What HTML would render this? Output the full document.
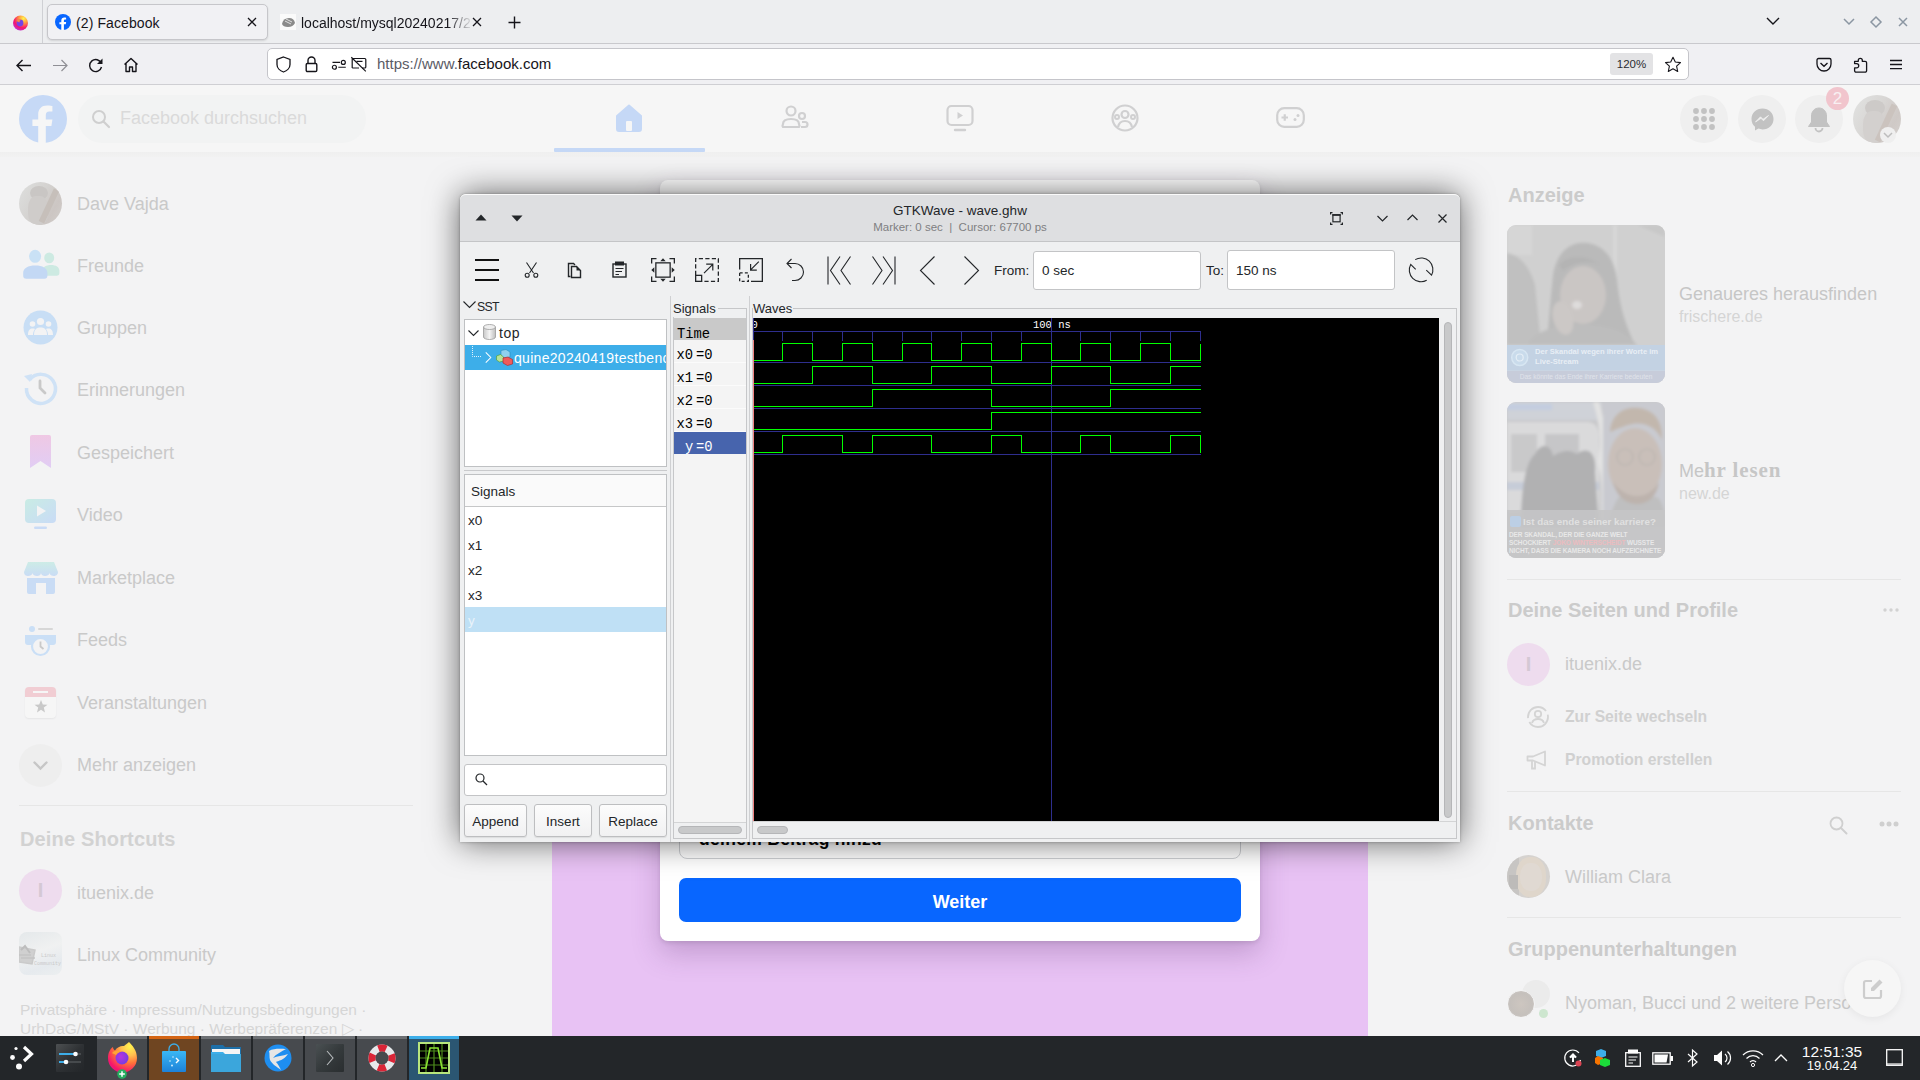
<!DOCTYPE html>
<html><head><meta charset="utf-8">
<style>
*{box-sizing:border-box;margin:0;padding:0}
html,body{width:1920px;height:1080px;overflow:hidden;background:#f3f3f4;font-family:"Liberation Sans",sans-serif}
.a{position:absolute}
svg{position:absolute;overflow:visible}
/* firefox */
#tabs{left:0;top:0;width:1920px;height:43px;background:#edeef0}
#nav{left:0;top:43px;width:1920px;height:42px;background:#f0f0f3;border-top:1px solid #c9c9cd;border-bottom:1px solid #cfcfd3}
#fb{left:0;top:85px;width:1920px;height:951px;background:#f3f3f4;overflow:hidden}
#gw{left:460px;top:194px;width:1000px;height:648px;background:#eff0f1;border-radius:6px 6px 0 0;box-shadow:0 0 3px rgba(0,0,0,.3), 0 0 32px rgba(0,0,0,.6)}
.it{position:absolute;left:77px;margin-top:1px;font-size:18px;line-height:22px;color:#c9c9c9;white-space:nowrap}
.sg{left:8px;font-size:13.5px;line-height:18px;color:#232629}
.btn{height:33px;border:1px solid #bdbec0;border-radius:3px;background:linear-gradient(#fcfcfc,#f1f1f2);box-shadow:0 1px 1px rgba(0,0,0,.08);font-size:13.5px;line-height:34px;text-align:center;color:#232629}
.mono{font-family:"Liberation Mono",monospace;font-size:13.8px;line-height:16px;color:#000;white-space:pre}
.tk{top:0;width:50px;height:44px;background:#474a4e;border-top:3px solid #6c6f73}
#task{left:0;top:1036px;width:1920px;height:44px;background:#232629}
</style></head><body>
<div id="tabs" class="a">
  <div class="a" style="left:42px;top:0;width:1px;height:43px;background:#cfd0d4"></div>
  <!-- firefox logo -->
  <svg style="left:12px;top:14px" width="17" height="17" viewBox="0 0 17 17">
    <defs><radialGradient id="ffg" cx="0.7" cy="0.2" r="0.9"><stop offset="0" stop-color="#fff44f"/><stop offset="0.35" stop-color="#ff9640"/><stop offset="0.7" stop-color="#f5156c"/><stop offset="1" stop-color="#b833e1"/></radialGradient></defs>
    <circle cx="8.5" cy="9" r="7.5" fill="url(#ffg)"/>
    <circle cx="8" cy="9" r="3.4" fill="#7542e5"/>
    <path d="M4.5 7 Q6 4.5 9.5 5.5 Q7 6.5 7.5 8.5 Z" fill="#ff8a3a"/>
  </svg>
  <div class="a" style="left:47px;top:4px;width:221px;height:36px;background:#f1f1f4;border:1px solid #c6c6ca;border-radius:5px;box-shadow:0 1px 2px rgba(0,0,0,.12)"></div>
  <svg style="left:55px;top:14px" width="16" height="16" viewBox="0 0 16 16"><circle cx="8" cy="8" r="8" fill="#0866ff"/><path d="M8.9 16V10.3h1.9l.35-2.2H8.9V6.8c0-.6.3-1.2 1.2-1.2h1V3.7s-.9-.15-1.8-.15c-1.8 0-3 1.1-3 3.1v1.5H4.4v2.2h1.9V16z" fill="#fff"/></svg>
  <div class="a" style="left:76px;top:14px;font-size:14px;line-height:18px;color:#15141a;letter-spacing:0.1px">(2) Facebook</div>
  <svg style="left:247px;top:17px" width="10" height="10" viewBox="0 0 10 10"><path d="M1 1L9 9M9 1L1 9" stroke="#15141a" stroke-width="1.3"/></svg>
  <!-- tab 2 -->
  <svg style="left:280px;top:14px" width="16" height="16" viewBox="0 0 16 16"><rect x="0" y="0" width="16" height="16" fill="#fafafa"/><path d="M2 10 Q3 4 9 4 Q14 4 15 9 Q13 13 8 13 Q3 13 2 10Z" fill="#8a8a8a"/><path d="M5 7 L11 10 M6 5 L12 8" stroke="#e0e0e0" stroke-width="1"/></svg>
  <div class="a" style="left:301px;top:14px;width:172px;height:20px;overflow:hidden;white-space:nowrap;font-size:14px;line-height:18px;color:#15141a;-webkit-mask-image:linear-gradient(90deg,#000 85%,transparent 100%)">localhost/mysql20240217/2</div>
  <svg style="left:472px;top:17px" width="10" height="10" viewBox="0 0 10 10"><path d="M1 1L9 9M9 1L1 9" stroke="#15141a" stroke-width="1.3"/></svg>
  <svg style="left:508px;top:16px" width="13" height="13" viewBox="0 0 13 13"><path d="M6.5 0.5V12.5M0.5 6.5H12.5" stroke="#15141a" stroke-width="1.4"/></svg>
  <!-- right -->
  <svg style="left:1766px;top:17px" width="14" height="8" viewBox="0 0 14 8"><path d="M1 1L7 7L13 1" stroke="#15141a" stroke-width="1.4" fill="none"/></svg>
  <svg style="left:1843px;top:18px" width="12" height="7" viewBox="0 0 12 7"><path d="M1 1L6 6L11 1" stroke="#8b96a2" stroke-width="1.5" fill="none"/></svg>
  <svg style="left:1870px;top:16px" width="12" height="12" viewBox="0 0 12 12"><path d="M6 1L11 6L6 11L1 6Z" stroke="#8b96a2" stroke-width="1.5" fill="none"/></svg>
  <svg style="left:1898px;top:17px" width="10" height="10" viewBox="0 0 10 10"><path d="M1 1L9 9M9 1L1 9" stroke="#8b96a2" stroke-width="1.5"/></svg>
</div>
<div id="nav" class="a">
  <svg style="left:16px;top:15px" width="16" height="13" viewBox="0 0 16 13"><path d="M15 6.5H1.5M6.5 1L1 6.5L6.5 12" stroke="#15141a" stroke-width="1.4" fill="none"/></svg>
  <svg style="left:52px;top:15px" width="16" height="13" viewBox="0 0 16 13"><path d="M1 6.5H14.5M9.5 1L15 6.5L9.5 12" stroke="#8f8f95" stroke-width="1.2" fill="none"/></svg>
  <svg style="left:88px;top:13px" width="16" height="16" viewBox="0 0 16 16"><path d="M13.3 6.5A6 6 0 1 0 13.5 10" stroke="#15141a" stroke-width="1.4" fill="none"/><path d="M14.5 1.5V7H9Z" fill="#15141a"/></svg>
  <svg style="left:123px;top:13px" width="16" height="16" viewBox="0 0 16 16"><path d="M1.5 7.5L8 1.5L14.5 7.5M3 6.5V14.5H6.5V10H9.5V14.5H13V6.5" stroke="#15141a" stroke-width="1.4" fill="none" stroke-linejoin="round"/></svg>
  <div class="a" style="left:267px;top:4px;width:1422px;height:32px;background:#fff;border:1px solid #c5c5ca;border-radius:5px"></div>
  <svg style="left:276px;top:12px" width="15" height="17" viewBox="0 0 15 17"><path d="M7.5 1L14 3.5V8.5C14 12 11 15 7.5 16C4 15 1 12 1 8.5V3.5Z" stroke="#15141a" stroke-width="1.3" fill="none"/></svg>
  <svg style="left:305px;top:12px" width="13" height="17" viewBox="0 0 13 17"><path d="M3 7V4.5A3.5 3.5 0 0 1 10 4.5V7" stroke="#15141a" stroke-width="1.4" fill="none"/><rect x="1.2" y="7.5" width="10.6" height="8" rx="1.2" stroke="#15141a" stroke-width="1.4" fill="none"/></svg>
  <svg style="left:332px;top:14px" width="15" height="13" viewBox="0 0 15 13"><path d="M0.5 4.4H8M6.3 9.25H13.8" stroke="#15141a" stroke-width="1.2"/><circle cx="11.3" cy="4.4" r="2" stroke="#15141a" stroke-width="1.2" fill="none"/><circle cx="2.4" cy="9.25" r="2" stroke="#15141a" stroke-width="1.2" fill="none"/></svg>
  <svg style="left:351px;top:13px" width="16" height="16" viewBox="0 0 16 16"><path d="M1.2 11V2.5A1 1 0 0 1 2.2 1.5H13.8A1 1 0 0 1 14.8 2.5V10A1 1 0 0 1 13.8 11H11M8 11H1.2" stroke="#15141a" stroke-width="1.2" fill="none"/><path d="M5.5 4.4H11.5" stroke="#15141a" stroke-width="1.2"/><path d="M0.3 0.3L14.8 14.4" stroke="#15141a" stroke-width="1.2"/></svg>
  <div class="a" style="left:377px;top:11px;font-size:15px;line-height:18px;color:#5b5b66;white-space:nowrap">https://www.<span style="color:#15141a">facebook.com</span></div>
  <div class="a" style="left:1610px;top:9px;width:43px;height:22px;background:#e3e3e5;border-radius:3px;font-size:11.5px;line-height:22px;text-align:center;color:#2b2b30">120%</div>
  <svg style="left:1664px;top:12px" width="18" height="17" viewBox="0 0 18 17"><path d="M9 1.2L11.3 6L16.5 6.6L12.6 10.2L13.7 15.5L9 12.8L4.3 15.5L5.4 10.2L1.5 6.6L6.7 6Z" stroke="#15141a" stroke-width="1.1" fill="none" stroke-linejoin="round"/></svg>
  <svg style="left:1816px;top:13px" width="16" height="15" viewBox="0 0 16 15"><path d="M2.5 1.5H13.5A1.5 1.5 0 0 1 15 3V7A7 7 0 0 1 1 7V3A1.5 1.5 0 0 1 2.5 1.5Z" stroke="#15141a" stroke-width="1.3" fill="none"/><path d="M4.5 6L8 9.2L11.5 6" stroke="#15141a" stroke-width="1.4" fill="none"/></svg>
  <svg style="left:1852px;top:12px" width="17" height="17" viewBox="0 0 17 17"><path d="M2.6 5.3H6.3V4.3A2 2 0 0 1 10.3 4.3V5.3H13.1A1.5 1.5 0 0 1 14.6 6.8V14.7A1.5 1.5 0 0 1 13.1 16.2H4.1A1.5 1.5 0 0 1 2.6 14.7V11.9H4.6A2.15 2.15 0 0 0 4.6 7.6H2.6Z" stroke="#15141a" stroke-width="1.3" fill="none" stroke-linejoin="round"/></svg>
  <svg style="left:1888px;top:14px" width="16" height="13" viewBox="0 0 16 13"><path d="M2 2.5H14M2 6.5H14M2 10.6H14" stroke="#15141a" stroke-width="1.3"/></svg>
</div>
<div id="fb" class="a">
  <!-- header -->
  <div class="a" style="left:0;top:0;width:1920px;height:67px;background:#f6f6f6"></div>
  <svg style="left:19px;top:10px" width="48" height="48" viewBox="0 0 48 48"><circle cx="24" cy="24" r="24" fill="#c6d9f6"/><path d="M26.8 48V31h5.6l1-6.6h-6.6v-4.2c0-1.9.9-3.6 3.6-3.6h3v-5.6s-2.7-.5-5.3-.5c-5.4 0-8.9 3.3-8.9 9.2v4.7h-5.8V31h5.8v17z" fill="#f6f6f6"/></svg>
  <div class="a" style="left:78px;top:10px;width:288px;height:48px;border-radius:24px;background:#f2f3f3"></div>
  <svg style="left:91px;top:24px" width="20" height="20" viewBox="0 0 20 20"><circle cx="8" cy="8" r="6" stroke="#cfcfcf" stroke-width="2" fill="none"/><path d="M12.5 12.5L18 18" stroke="#cfcfcf" stroke-width="2.2" stroke-linecap="round"/></svg>
  <div class="a" style="left:120px;top:22px;font-size:18px;line-height:22px;color:#dadada;white-space:nowrap">Facebook durchsuchen</div>
  <!-- nav icons -->
  <svg style="left:615px;top:19px" width="28" height="28" viewBox="0 0 28 28"><path d="M14 1.5L26 12V25A2 2 0 0 1 24 27H4A2 2 0 0 1 2 25V12Z" fill="#c5d8f6" stroke="#c5d8f6" stroke-width="2" stroke-linejoin="round"/><rect x="11" y="17" width="6" height="10" rx="1" fill="#f6f6f6"/></svg>
  <div class="a" style="left:554px;top:63px;width:151px;height:3.5px;background:#c5d8f6;border-radius:1px"></div>
  <div class="a" style="left:0;top:67px;width:1920px;height:5px;background:linear-gradient(#efefef,#f2f2f2)"></div>
  <svg style="left:781px;top:20px" width="28" height="26" viewBox="0 0 28 26"><circle cx="10" cy="6" r="4.5" stroke="#d0d0d1" stroke-width="2.2" fill="none"/><path d="M2 22A3 3 0 0 1 2 19C2 15 6 14 10 14C14 14 18 15 18 19A3 3 0 0 1 18 22Z" stroke="#d0d0d1" stroke-width="2.2" fill="none"/><circle cx="21" cy="11" r="3" stroke="#d0d0d1" stroke-width="2.2" fill="none"/><path d="M20 22H24A2.5 2.5 0 0 0 24 17H21" stroke="#d0d0d1" stroke-width="2.2" fill="none"/></svg>
  <svg style="left:946px;top:19px" width="28" height="28" viewBox="0 0 28 28"><rect x="1.5" y="2" width="25" height="19" rx="4" stroke="#d0d0d1" stroke-width="2.2" fill="none"/><path d="M11.5 8V15L17 11.5Z" fill="#d0d0d1"/><path d="M9 26H19" stroke="#d0d0d1" stroke-width="2.4" stroke-linecap="round"/></svg>
  <svg style="left:1111px;top:19px" width="28" height="28" viewBox="0 0 28 28"><circle cx="14" cy="14" r="12.5" stroke="#d0d0d1" stroke-width="2.2" fill="none"/><circle cx="14" cy="10.5" r="3.5" stroke="#d0d0d1" stroke-width="2.2" fill="none"/><circle cx="6" cy="13" r="2" stroke="#d0d0d1" stroke-width="2" fill="none"/><circle cx="22" cy="13" r="2" stroke="#d0d0d1" stroke-width="2" fill="none"/><path d="M7 23C8 18 11 17 14 17C17 17 20 18 21 23" stroke="#d0d0d1" stroke-width="2.2" fill="none"/></svg>
  <svg style="left:1276px;top:22px" width="29" height="21" viewBox="0 0 29 21"><rect x="1.2" y="1.2" width="26.6" height="18.6" rx="7" stroke="#d0d0d1" stroke-width="2.2" fill="none"/><path d="M5.5 10.5H12M8.75 7.2V13.8" stroke="#d0d0d1" stroke-width="2.2"/><circle cx="19" cy="12.5" r="1.5" fill="#d0d0d1"/><circle cx="22" cy="8.5" r="1.5" fill="#d0d0d1"/></svg>
  <!-- right header -->
  <div class="a" style="left:1680px;top:10px;width:48px;height:48px;border-radius:50%;background:#efefef"></div>
  <svg style="left:1693px;top:23px" width="22" height="22" viewBox="0 0 22 22"><g fill="#c2c2c2"><circle cx="3" cy="3" r="2.9"/><circle cx="11" cy="3" r="2.9"/><circle cx="19" cy="3" r="2.9"/><circle cx="3" cy="11" r="2.9"/><circle cx="11" cy="11" r="2.9"/><circle cx="19" cy="11" r="2.9"/><circle cx="3" cy="19" r="2.9"/><circle cx="11" cy="19" r="2.9"/><circle cx="19" cy="19" r="2.9"/></g></svg>
  <div class="a" style="left:1738px;top:10px;width:48px;height:48px;border-radius:50%;background:#efefef"></div>
  <svg style="left:1751px;top:23px" width="23" height="23" viewBox="0 0 23 23"><path d="M11.5 0.5C5.3 0.5 0.5 5 0.5 11C0.5 14.2 1.8 17 4 18.8V22.5L7.4 20.6C8.7 21.1 10 21.4 11.5 21.4C17.7 21.4 22.5 16.9 22.5 10.9C22.5 5 17.7 0.5 11.5 0.5Z" fill="#c2c2c2"/><path d="M4.5 14L9.5 8.8L12 11.3L17.5 7.5L12.5 12.8L10 10.3Z" fill="#efefef" stroke="#efefef" stroke-width="0.8" stroke-linejoin="round"/></svg>
  <div class="a" style="left:1795px;top:10px;width:48px;height:48px;border-radius:50%;background:#efefef"></div>
  <svg style="left:1808px;top:22px" width="22" height="25" viewBox="0 0 22 25"><path d="M11 1C6.5 1 3.5 4.5 3.5 9V15L0.5 19.5H21.5L18.5 15V9C18.5 4.5 15.5 1 11 1Z" fill="#c2c2c2" stroke="#c2c2c2" stroke-linejoin="round"/><path d="M7.5 21A3.5 3.5 0 0 0 14.5 21" stroke="#c2c2c2" stroke-width="1.8" fill="none"/></svg>
  <div class="a" style="left:1826px;top:2px;width:23px;height:23px;border-radius:50%;background:#f1c5cd;color:#f8f0f2;font-size:17px;line-height:23px;text-align:center">2</div>
  <div class="a" style="left:1853px;top:10px;width:48px;height:48px;border-radius:50%;background:linear-gradient(120deg,#e2e3e2 0,#d8d6d4 45%,#cfc9c6 75%,#d6d2cf 100%);overflow:hidden">
    <div class="a" style="left:12px;top:5px;width:20px;height:16px;border-radius:50%;background:#cdcac8"></div>
    <div class="a" style="left:10px;top:16px;width:22px;height:32px;border-radius:40%;background:#d3d0ce"></div>
    <div class="a" style="left:30px;top:8px;width:6px;height:40px;background:#cbc3be;transform:rotate(25deg)"></div>
  </div>
  <div class="a" style="left:1880px;top:42px;width:16px;height:16px;border-radius:50%;background:#efefef"></div>
  <svg style="left:1883px;top:47px" width="10" height="6" viewBox="0 0 10 6"><path d="M1 1L5 5L9 1" stroke="#bdbdbd" stroke-width="1.5" fill="none"/></svg>

  <!-- modal area (center) -->
  <div class="a" style="left:552px;top:85px;width:816px;height:866px;background:#e8c2f4"></div>
  <div class="a" style="left:552px;top:86px;width:816px;height:200px;background:#f3f3f4;border-radius:8px;border:1px solid #ececec"></div>
  <div class="a" style="left:552px;top:85px;width:816px;height:580px;background:#f3f3f4;border-radius:0 0 8px 8px"></div>
  <div class="a" style="left:660px;top:95px;width:600px;height:761px;background:#fff;border-radius:8px;box-shadow:0 12px 28px rgba(80,40,100,.25),0 2px 4px rgba(0,0,0,.1)"></div>
  <div class="a" style="left:679px;top:700px;width:562px;height:74px;border:1px solid #ced0d4;border-radius:8px;background:#fff"></div>
  <div class="a" style="left:699px;top:744px;font-size:17.5px;line-height:20px;font-weight:bold;color:#050505;white-space:nowrap;letter-spacing:0.3px">deinem Beitrag hinzu</div>
  <div class="a" style="left:679px;top:793px;width:562px;height:44px;border-radius:7px;background:#0866ff;color:#fff;font-weight:bold;font-size:18px;line-height:48px;text-align:center">Weiter</div>

  <!-- right sidebar -->
  <div class="a" style="left:1508px;top:98px;font-size:20px;line-height:24px;font-weight:bold;color:#cbcbcb">Anzeige</div>
  <div class="a" style="left:1507px;top:140px;width:158px;height:158px;border-radius:9px;overflow:hidden;background:#d1d1d1">
  <svg style="left:0;top:0" width="158" height="158" viewBox="0 0 158 158">
    <defs><filter id="bl1" x="-20%" y="-20%" width="140%" height="140%"><feGaussianBlur stdDeviation="1.6"/></filter></defs>
    <g filter="url(#bl1)">
      <rect x="0" y="0" width="158" height="158" fill="#d0d0d0"/>
      <rect x="0" y="0" width="25" height="30" fill="#d6d6d6"/>
      <rect x="106" y="0" width="4" height="120" fill="#d7d7d7"/>
      <path d="M130 0L158 12V0Z" fill="#c8c8c8"/>
      <path d="M0 28C12 30 22 40 28 60L34 120H0Z" fill="#c0c0c0"/>
      <path d="M40 120C42 90 44 70 46 50C50 25 65 16 80 18C98 20 108 35 110 55C112 75 116 95 128 120Z" fill="#bababa"/>
      <ellipse cx="76" cy="70" rx="23" ry="29" fill="#cac6c4"/>
      <path d="M52 40C60 30 80 28 96 42C90 36 70 34 56 46Z" fill="#b4b4b4"/>
      <path d="M20 120C30 104 50 100 76 100C100 100 118 106 130 120Z" fill="#bdbdbd"/>
      <ellipse cx="56" cy="93" rx="10" ry="17" fill="#ccc8c6" transform="rotate(-15 56 93)"/>
      <ellipse cx="70" cy="80" rx="5" ry="4" fill="#dedcdb"/>
    </g>
    <rect x="0" y="120" width="158" height="26" fill="#c3d2e3"/>
    <rect x="0" y="145.5" width="158" height="1" fill="#d0d8e4"/>
    <rect x="0" y="146" width="158" height="12" fill="#c7ccda"/>
    <circle cx="12.7" cy="132.5" r="8" fill="#c9dbeb" stroke="#d7e6f2" stroke-width="1.5"/>
    <circle cx="12.7" cy="132.5" r="3.5" fill="none" stroke="#e5eef6" stroke-width="1.2"/>
  </svg>
  <div class="a" style="left:28px;top:122px;font-size:7.6px;line-height:10px;font-weight:bold;color:#e8eef5;white-space:nowrap">Der Skandal wegen ihrer Worte im<br>Live-Stream</div>
  <div class="a" style="left:0;top:147px;width:158px;font-size:6.6px;line-height:10px;color:#e0e3ea;text-align:center;white-space:nowrap">Das könnte das Ende ihrer Karriere bedeuten</div>
</div>
  <div class="a" style="left:1679px;top:198px;font-size:18px;line-height:22px;color:#c6c6c6;white-space:nowrap">Genaueres herausfinden</div>
  <div class="a" style="left:1679px;top:222px;font-size:16px;line-height:19px;color:#d5d5d5;white-space:nowrap">frischere.de</div>
  <div class="a" style="left:1507px;top:317px;width:158px;height:156px;border-radius:9px;overflow:hidden;background:#c9c9cb">
  <svg style="left:0;top:0" width="158" height="156" viewBox="0 0 158 156">
    <defs><filter id="bl2" x="-20%" y="-20%" width="140%" height="140%"><feGaussianBlur stdDeviation="1.4"/></filter></defs>
    <g filter="url(#bl2)">
      <rect x="0" y="0" width="158" height="156" fill="#c8c8ca"/>
      <rect x="0" y="0" width="95" height="18" fill="#cfd2d8"/>
      <rect x="0" y="2" width="45" height="6" fill="#c3cde0"/>
      <path d="M0 20H80C88 20 92 26 92 34V110H0Z" fill="#dadadb"/>
      <path d="M4 32H30V70H4Z" fill="#c9c9ca"/>
      <path d="M38 32H72V62H38Z" fill="#c6c6c8"/>
      <rect x="0" y="80" width="92" height="8" fill="#c6ccd8"/>
      <path d="M14 125C14 90 18 60 28 52C34 40 44 42 46 54C52 50 62 46 70 52C80 44 90 50 88 70L92 125Z" fill="#b1b1b2"/>
      <path d="M86 0C92 20 96 40 90 60C98 80 92 100 96 125L102 125C98 100 104 80 96 60C102 40 98 20 92 0Z" fill="#e2e2e2"/>
      <path d="M96 0H158V156H96Z" fill="#c9cad0"/>
      <path d="M100 125C104 110 108 100 112 95L150 95C156 100 158 110 158 125Z" fill="#bfbfc0"/>
      <ellipse cx="128" cy="62" rx="27" ry="36" fill="#c9bfb9"/>
      <path d="M103 30C104 10 120 4 132 6C148 8 156 20 155 38C150 26 138 20 126 22C116 24 108 28 103 30Z" fill="#c2b7ad"/>
      <path d="M106 80C110 96 120 102 130 102C142 102 150 94 152 80C146 90 138 94 130 94C120 94 112 88 106 80Z" fill="#bdb3ad"/>
      <circle cx="118" cy="55" r="8" fill="none" stroke="#b9b3ae" stroke-width="1.2"/>
      <circle cx="140" cy="55" r="8" fill="none" stroke="#b9b3ae" stroke-width="1.2"/>
    </g>
    <rect x="0" y="108" width="158" height="48" fill="#c5c5c6" opacity="0.9"/>
    <rect x="3" y="114" width="11" height="11" rx="2" fill="#bccfe5"/>
  </svg>
  <div class="a" style="left:16px;top:113px;font-size:9.8px;line-height:14px;font-weight:bold;color:#e0e0e0;white-space:nowrap">Ist das ende seiner karriere?</div>
  <div class="a" style="left:2px;top:129px;font-size:6.5px;line-height:8px;font-weight:bold;color:#e8e8e8;white-space:nowrap;letter-spacing:-0.1px">DER SKANDAL, DER DIE GANZE WELT<br>SCHOCKIERT <span style="color:#ebbcbf">JOKO WINTERSCHEIDT</span> WUSSTE<br>NICHT, DASS DIE KAMERA NOCH AUFZEICHNETE</div>
</div>
  <div class="a" style="left:1679px;top:374px;font-size:18px;line-height:22px;color:#c6c6c6;white-space:nowrap">Me<span style="font-family:'Liberation Serif',serif;font-weight:bold;font-size:21px;letter-spacing:0.9px">hr lesen</span></div>
  <div class="a" style="left:1679px;top:399px;font-size:16px;line-height:19px;color:#d5d5d5;white-space:nowrap">new.de</div>
  <div class="a" style="left:1507px;top:494px;width:394px;height:1px;background:#e6e6e6"></div>
  <div class="a" style="left:1508px;top:513px;font-size:20px;line-height:24px;font-weight:bold;color:#cbcbcb;white-space:nowrap">Deine Seiten und Profile</div>
  <svg style="left:1883px;top:523px" width="16" height="4" viewBox="0 0 16 4"><g fill="#d2d2d2"><circle cx="2" cy="2" r="1.7"/><circle cx="8" cy="2" r="1.7"/><circle cx="14" cy="2" r="1.7"/></g></svg>
  <div class="a" style="left:1507px;top:558px;width:43px;height:43px;border-radius:50%;background:#eedcee;color:#d4c8d4;font-size:20px;line-height:43px;text-align:center;font-weight:bold">I</div>
  <div class="a" style="left:1565px;top:568px;font-size:18px;line-height:22px;color:#c9c9c9;white-space:nowrap">ituenix.de</div>
  <svg style="left:1526px;top:621px" width="24" height="22" viewBox="0 0 24 22"><circle cx="12" cy="11" r="10" stroke="#d4d4d4" stroke-width="1.8" fill="none" stroke-dasharray="26 4 26 4"/><circle cx="12" cy="8" r="3.2" stroke="#d4d4d4" stroke-width="1.8" fill="none"/><path d="M6 17C7 13.5 9.5 13 12 13C14.5 13 17 13.5 18 17" stroke="#d4d4d4" stroke-width="1.8" fill="none"/></svg>
  <div class="a" style="left:1565px;top:622px;font-size:15.7px;line-height:20px;font-weight:bold;color:#d0d0d0;white-space:nowrap">Zur Seite wechseln</div>
  <svg style="left:1526px;top:665px" width="24" height="20" viewBox="0 0 24 20"><path d="M1.5 6.5H7L19 1.5V15.5L7 10.5H1.5Z" stroke="#d4d4d4" stroke-width="1.8" fill="none" stroke-linejoin="round"/><path d="M6 11V18.5H9V11.5" stroke="#d4d4d4" stroke-width="1.8" fill="none"/></svg>
  <div class="a" style="left:1565px;top:665px;font-size:15.7px;line-height:20px;font-weight:bold;color:#d0d0d0;white-space:nowrap">Promotion erstellen</div>
  <div class="a" style="left:1507px;top:706px;width:394px;height:1px;background:#e6e6e6"></div>
  <div class="a" style="left:1508px;top:726px;font-size:20px;line-height:24px;font-weight:bold;color:#cbcbcb;white-space:nowrap">Kontakte</div>
  <svg style="left:1829px;top:731px" width="19" height="19" viewBox="0 0 19 19"><circle cx="7.5" cy="7.5" r="6" stroke="#cfcfcf" stroke-width="1.8" fill="none"/><path d="M12 12L17.5 17.5" stroke="#cfcfcf" stroke-width="2" stroke-linecap="round"/></svg>
  <svg style="left:1879px;top:736px" width="20" height="6" viewBox="0 0 20 6"><g fill="#cfcfcf"><circle cx="3" cy="3" r="2.5"/><circle cx="10" cy="3" r="2.5"/><circle cx="17" cy="3" r="2.5"/></g></svg>
  <div class="a" style="left:1507px;top:770px;width:43px;height:43px;border-radius:50%;overflow:hidden;background:#d5d2cf">
    <div class="a" style="left:0;top:0;width:12px;height:43px;background:#c7c5c3"></div>
    <div class="a" style="left:9px;top:2px;width:30px;height:40px;border-radius:45%;background:#dfd6cb"></div>
    <div class="a" style="left:13px;top:8px;width:22px;height:28px;border-radius:45%;background:#e0d9d2"></div>
    <div class="a" style="left:2px;top:20px;width:9px;height:14px;background:#bdbbb9"></div>
  </div>
  <div class="a" style="left:1565px;top:781px;font-size:18px;line-height:22px;color:#c9c9c9;white-space:nowrap">William Clara</div>
  <div class="a" style="left:1507px;top:832px;width:394px;height:1px;background:#e6e6e6"></div>
  <div class="a" style="left:1508px;top:852px;font-size:20px;line-height:24px;font-weight:bold;color:#cbcbcb;white-space:nowrap">Gruppenunterhaltungen</div>
  <div class="a" style="left:1522px;top:895px;width:28px;height:28px;border-radius:50%;background:#ebebeb"></div>
  <div class="a" style="left:1507px;top:905px;width:28px;height:28px;border-radius:50%;background:radial-gradient(circle,#cdc6c0 0,#c5c0bc 60%,#d3d0cd 100%);border:1px solid #f3f3f4"></div>
  <div class="a" style="left:1539px;top:924px;width:9px;height:9px;border-radius:50%;background:#cde6cf"></div>
  <div class="a" style="left:1565px;top:907px;width:290px;overflow:hidden;font-size:18px;line-height:22px;color:#c9c9c9;white-space:nowrap">Nyoman, Bucci und 2 weitere Personen</div>
  <div class="a" style="left:1844px;top:875px;width:57px;height:57px;border-radius:50%;background:#f6f6f6;box-shadow:0 2px 8px rgba(0,0,0,.06)"></div>
  <svg style="left:1862px;top:893px" width="22" height="22" viewBox="0 0 22 22"><path d="M10 3H4A2 2 0 0 0 2 5V18A2 2 0 0 0 4 20H17A2 2 0 0 0 19 18V12" stroke="#cdcdcd" stroke-width="2.2" fill="none"/><path d="M17.5 1.5L20.5 4.5L12 13H9V10Z" fill="#cdcdcd"/></svg>
  <!-- left sidebar -->
  <div id="ls" class="a" style="left:0;top:0;width:420px;height:951px">
    <div class="a" style="left:19px;top:97px;width:43px;height:43px;border-radius:50%;background:linear-gradient(120deg,#dedfde 0,#d4d2d0 45%,#ccc6c3 75%,#d3cfcc 100%);overflow:hidden"><div class="a" style="left:11px;top:4px;width:18px;height:14px;border-radius:50%;background:#c9c6c4"></div><div class="a" style="left:9px;top:14px;width:20px;height:29px;border-radius:40%;background:#cfccca"></div><div class="a" style="left:27px;top:6px;width:6px;height:36px;background:#c6bfba;transform:rotate(25deg)"></div></div>
    <div class="it" style="top:107px">Dave Vajda</div>
    <svg style="left:22px;top:165px" width="38" height="30" viewBox="0 0 38 30"><ellipse cx="27.2" cy="7.9" rx="5" ry="5.4" fill="#cdeae2"/><path d="M20.5 23V21C20.5 17 24 15 29 15C34 15 37.4 17 37.4 21V23A2.7 2.7 0 0 1 34.7 25.7H23.2A2.7 2.7 0 0 1 20.5 23Z" fill="#cdeae2"/><ellipse cx="13.1" cy="6.3" rx="6" ry="6.5" fill="#c9e1f5"/><path d="M1.2 25.8V23C1.2 18 6 15.5 13.3 15.5C20.6 15.5 25.4 18 25.4 23V25.8A3 3 0 0 1 22.4 28.8H4.2A3 3 0 0 1 1.2 25.8Z" fill="#c3d8f4"/></svg>
    <div class="it" style="top:169px">Freunde</div>
    <svg style="left:23px;top:225px" width="35" height="35" viewBox="0 0 35 35"><circle cx="17.5" cy="17.5" r="17" fill="#c8def5"/><g fill="#f3f3f4"><circle cx="17.5" cy="11.5" r="3.6"/><circle cx="9.5" cy="14" r="2.8"/><circle cx="25.5" cy="14" r="2.8"/><path d="M11 25C11 19 14 17.5 17.5 17.5C21 17.5 24 19 24 25Z"/><path d="M5 25C5 20 7 18.5 9.5 18.5C11.5 18.5 12 19 12 19C10.5 21 10 23 10 25Z"/><path d="M30 25C30 20 28 18.5 25.5 18.5C23.5 18.5 23 19 23 19C24.5 21 25 23 25 25Z"/></g></svg>
    <div class="it" style="top:231px">Gruppen</div>
    <svg style="left:23px;top:285px" width="36" height="36" viewBox="0 0 36 36"><path d="M6.5 10A14.5 14.5 0 1 1 3.5 18" stroke="#cfe2f6" stroke-width="3.5" fill="none"/><path d="M1 6L9 4L7 12Z" fill="#cfe2f6"/><path d="M17 11V18L22 23" stroke="#c9c9c9" stroke-width="2.8" fill="none" stroke-linecap="round"/></svg>
    <div class="it" style="top:293px">Erinnerungen</div>
    <svg style="left:30px;top:350px" width="21" height="34" viewBox="0 0 21 34"><defs><linearGradient id="bm" x1="0" y1="0" x2="0" y2="1"><stop offset="0" stop-color="#efc8e4"/><stop offset="1" stop-color="#e1cdf4"/></linearGradient></defs><path d="M2 0H19A2 2 0 0 1 21 2V33L10.5 26L0 33V2A2 2 0 0 1 2 0Z" fill="url(#bm)"/></svg>
    <div class="it" style="top:356px">Gespeichert</div>
    <svg style="left:25px;top:414px" width="32" height="31" viewBox="0 0 32 31"><defs><linearGradient id="vd" x1="0" y1="0" x2="1" y2="1"><stop offset="0" stop-color="#c9ece4"/><stop offset="1" stop-color="#c9dbf6"/></linearGradient></defs><rect x="0" y="0" width="31" height="24" rx="4" fill="url(#vd)"/><path d="M12 6.5V17.5L21 12Z" fill="#f3f3f4"/><rect x="9" y="27.5" width="13" height="2.5" rx="1.2" fill="#c9dbf6"/></svg>
    <div class="it" style="top:418px">Video</div>
    <svg style="left:24px;top:477px" width="34" height="32" viewBox="0 0 34 32"><defs><linearGradient id="mp" x1="0" y1="0" x2="0" y2="1"><stop offset="0" stop-color="#cdece6"/><stop offset="1" stop-color="#c9dcf5"/></linearGradient></defs><path d="M4 0H30L34 10C34 13 31.5 14 30 14C28 14 25.5 13 25.5 11C25.5 13 23 14 21 14C19 14 17 13 17 11C17 13 15 14 13 14C11 14 8.5 13 8.5 11C8.5 13 6 14 4 14C2 14 0 13 0 10Z" fill="url(#mp)"/><path d="M3 16H31V30A2 2 0 0 1 29 32H22V21H12V32H5A2 2 0 0 1 3 30Z" fill="#c9dcf5"/></svg>
    <div class="it" style="top:481px">Marketplace</div>
    <svg style="left:25px;top:540px" width="31" height="32" viewBox="0 0 31 32"><circle cx="7" cy="4" r="3" fill="#cadff6"/><rect x="13" y="3" width="15" height="2" rx="1" fill="#d7d7d7"/><path d="M0 10H31V17A3 3 0 0 1 28 20H3A3 3 0 0 1 0 17Z" fill="#cadff6"/><circle cx="15.5" cy="21.5" r="8.5" fill="#f3f3f4" stroke="#cadff6" stroke-width="2.2"/><path d="M15.5 16.5V21.5L18.5 24" stroke="#c9c9c9" stroke-width="1.8" fill="none"/></svg>
    <div class="it" style="top:543px">Feeds</div>
    <div class="a" style="left:25px;top:602px;width:31px;height:31px;border-radius:4px;background:#f6f6f6;box-shadow:0 1px 2px rgba(0,0,0,.06)"></div>
    <div class="a" style="left:25px;top:602px;width:31px;height:10px;border-radius:4px 4px 0 0;background:#f1cdd3"></div>
    <div class="a" style="left:33px;top:606px;width:15px;height:2px;background:#f6f6f6"></div>
    <svg style="left:34px;top:615px" width="14" height="13" viewBox="0 0 14 13"><path d="M7 0L8.8 4.5L13.5 4.7L9.8 7.6L11 12.5L7 9.8L3 12.5L4.2 7.6L0.5 4.7L5.2 4.5Z" fill="#c9c9c9"/></svg>
    <div class="it" style="top:606px">Veranstaltungen</div>
    <div class="a" style="left:19px;top:659px;width:43px;height:43px;border-radius:50%;background:#eeeeee"></div>
    <svg style="left:33px;top:676px" width="15" height="9" viewBox="0 0 15 9"><path d="M1.5 1.5L7.5 7.5L13.5 1.5" stroke="#c6c6c6" stroke-width="2.4" fill="none" stroke-linecap="round"/></svg>
    <div class="it" style="top:668px">Mehr anzeigen</div>
    <div class="a" style="left:19px;top:720px;width:394px;height:1px;background:#e6e6e6"></div>
    <div class="a" style="left:20px;top:742px;font-size:20px;line-height:24px;font-weight:bold;color:#d2d2d2;letter-spacing:0.15px">Deine Shortcuts</div>
    <div class="a" style="left:19px;top:784px;width:43px;height:43px;border-radius:50%;background:#eedcee;color:#d4c8d4;font-size:20px;line-height:43px;text-align:center;font-weight:bold">I</div>
    <div class="it" style="top:796px">ituenix.de</div>
    <div class="a" style="left:19px;top:847px;width:43px;height:43px;border-radius:8px;overflow:hidden;background:linear-gradient(160deg,#e4e8ea,#f0f1f1 45%,#e6eaee 75%,#eceff0)">
      <svg style="left:0;top:0" width="43" height="43" viewBox="0 0 43 43"><path d="M0 15L16 18L13 32L0 30Z" fill="#d0d0d0" stroke="#cacaca" stroke-width="1.5"/><path d="M2 18L6 14L11 21" stroke="#bdbdbd" stroke-width="2" fill="none"/><path d="M0 23H12M2 26H16" stroke="#c3c3c3" stroke-width="1.5"/><text x="22" y="25" font-family="Liberation Mono" font-size="5" fill="#cacaca">Linux</text><text x="15" y="33" font-family="Liberation Mono" font-size="5" fill="#cacaca">Community</text></svg>
    </div>
    <div class="it" style="top:858px">Linux Community</div>
    <div class="a" style="left:20px;top:916px;font-size:15.5px;line-height:18px;color:#d6d6d6;white-space:nowrap">Privatsphäre · Impressum/Nutzungsbedingungen ·</div>
    <div class="a" style="left:20px;top:935px;font-size:15.5px;line-height:18px;color:#d6d6d6;white-space:nowrap">UrhDaG/MStV · Werbung · Werbepräferenzen ▷ ·</div>
  </div>
</div>
<div id="gw" class="a">
  <!-- title bar -->
  <div class="a" style="left:0;top:0;width:1000px;height:48px;background:#dedfe1;border-radius:6px 6px 0 0;border-bottom:1px solid #c4c5c7;border-top:1px solid #fafafa"></div>
  <svg style="left:15px;top:20px" width="12" height="7" viewBox="0 0 12 7"><path d="M0.5 6.5L6 0.5L11.5 6.5Z" fill="#232629"/></svg>
  <svg style="left:51px;top:21px" width="12" height="7" viewBox="0 0 12 7"><path d="M0.5 0.5L6 6.5L11.5 0.5Z" fill="#232629"/></svg>
  <div class="a tt" style="left:0;top:8px;width:1000px;text-align:center;font-size:13.5px;line-height:18px;color:#232629">GTKWave - wave.ghw</div>
  <div class="a" style="left:0;top:26px;width:1000px;text-align:center;font-size:11.5px;line-height:14px;color:#7f8081;white-space:pre">Marker: 0 sec  |  Cursor: 67700 ps</div>
  <svg style="left:870px;top:18px" width="13" height="13" viewBox="0 0 13 13"><path d="M0.6 2.5V0.6H2.5M10.5 0.6H12.4V2.5M12.4 10.5V12.4H10.5M2.5 12.4H0.6V10.5" stroke="#232629" stroke-width="1.2" fill="none"/><rect x="2.9" y="2.8" width="7.2" height="7" stroke="#232629" stroke-width="1.2" fill="none"/><rect x="2.3" y="2.2" width="8.4" height="1.6" fill="#232629"/></svg>
  <svg style="left:917px;top:21px" width="11" height="7" viewBox="0 0 11 7"><path d="M0.5 1L5.5 6L10.5 1" stroke="#232629" stroke-width="1.2" fill="none"/></svg>
  <svg style="left:947px;top:20px" width="11" height="7" viewBox="0 0 11 7"><path d="M0.5 6L5.5 1L10.5 6" stroke="#232629" stroke-width="1.2" fill="none"/></svg>
  <svg style="left:978px;top:20px" width="9" height="9" viewBox="0 0 9 9"><path d="M0.5 0.5L8.5 8.5M8.5 0.5L0.5 8.5" stroke="#232629" stroke-width="1.2"/></svg>

  <!-- toolbar icons -->
  <svg style="left:15px;top:65px" width="24" height="22" viewBox="0 0 24 22"><path d="M0 1H24M0 11H24M0 21H24" stroke="#111" stroke-width="2"/></svg>
  <svg style="left:64px;top:68px" width="15" height="17" viewBox="0 0 15 17"><path d="M2.5 0.5L9.5 11M12.5 0.5L5.5 11" stroke="#232629" stroke-width="1.1"/><circle cx="3.2" cy="13.3" r="2" stroke="#232629" stroke-width="1.1" fill="none"/><circle cx="11.8" cy="13.3" r="2" stroke="#232629" stroke-width="1.1" fill="none"/></svg>
  <svg style="left:107px;top:68px" width="15" height="17" viewBox="0 0 15 17"><path d="M3.5 14.5H1.5V1.5H6.5L8 3" stroke="#232629" stroke-width="1.4" fill="none"/><path d="M4.5 4.5H9.5L13.5 8.5V15.5H4.5Z" stroke="#232629" stroke-width="1.4" fill="none"/><path d="M9.5 4.5V8.5H13.5" fill="#232629"/></svg>
  <svg style="left:152px;top:67px" width="15" height="17" viewBox="0 0 15 17"><rect x="1" y="3" width="13" height="13" stroke="#232629" stroke-width="1.4" fill="none"/><rect x="3" y="0.5" width="9" height="4" fill="#232629"/><path d="M3.5 7.5H11.5M3.5 10.5H10M3.5 13.5H7" stroke="#232629" stroke-width="1.2"/></svg>
  <svg style="left:191px;top:64px" width="24" height="24" viewBox="0 0 24 24"><path d="M0.65 5.5V0.65H5.5M18.5 0.65H23.35V5.5M0.65 18.5V23.35H5.5M18.5 23.35H23.35V18.5" stroke="#232629" stroke-width="1.3" fill="none"/><rect x="4.85" y="4.85" width="14.3" height="14.3" stroke="#232629" stroke-width="1.3" fill="none"/><path d="M12 0.3L9.3 3.3H14.7ZM12 23.7L9.3 20.7H14.7ZM0.3 12L3.3 9.3V14.7ZM23.7 12L20.7 9.3V14.7Z" fill="#232629"/></svg>
  <svg style="left:235px;top:64px" width="24" height="24" viewBox="0 0 24 24"><path d="M0.65 17V0.65H23.35V23.35H7" stroke="#232629" stroke-width="1.3" fill="none" stroke-dasharray="4.2 2.3"/><rect x="0.65" y="17.35" width="6" height="6" stroke="#232629" stroke-width="1.3" fill="none"/><path d="M9 15.2L17.8 6.4M11.2 6.2H17.8V12.6" stroke="#232629" stroke-width="1.2" fill="none"/></svg>
  <svg style="left:279px;top:64px" width="24" height="24" viewBox="0 0 24 24"><path d="M0.65 11.6V0.65H23.35V23.35H12" stroke="#232629" stroke-width="1.3" fill="none"/><path d="M0.65 14.95H9.35V23.35H0.65Z" stroke="#232629" stroke-width="1.3" fill="none" stroke-dasharray="3 2.2"/><path d="M19.8 3.6L11.6 11.8M11.6 6V12.1H17.8" stroke="#232629" stroke-width="1.2" fill="none"/></svg>
  <svg style="left:325px;top:63px" width="21" height="26" viewBox="0 0 21 26"><path d="M2 6.5H10A8.5 8.5 0 0 1 10 23.5H7" stroke="#232629" stroke-width="1.1" fill="none"/><path d="M6.5 2L2 6.5L6.5 11" stroke="#232629" stroke-width="1.1" fill="none"/></svg>
  <svg style="left:367px;top:62px" width="25" height="29" viewBox="0 0 25 29"><path d="M1 0.5V28.5" stroke="#232629" stroke-width="1.1"/><path d="M13 0.5L3.5 14.5L13 28.5M23.5 0.5L14 14.5L23.5 28.5" stroke="#232629" stroke-width="1.1" fill="none"/></svg>
  <svg style="left:411px;top:62px" width="25" height="29" viewBox="0 0 25 29"><path d="M24 0.5V28.5" stroke="#232629" stroke-width="1.1"/><path d="M12 0.5L21.5 14.5L12 28.5M1.5 0.5L11 14.5L1.5 28.5" stroke="#232629" stroke-width="1.1" fill="none"/></svg>
  <svg style="left:459px;top:62px" width="17" height="29" viewBox="0 0 17 29"><path d="M15.5 0.5L1.5 14.5L15.5 28.5" stroke="#232629" stroke-width="1.1" fill="none"/></svg>
  <svg style="left:503px;top:62px" width="17" height="29" viewBox="0 0 17 29"><path d="M1.5 0.5L15.5 14.5L1.5 28.5" stroke="#232629" stroke-width="1.1" fill="none"/></svg>
  <div class="a" style="left:534px;top:68px;font-size:13.5px;line-height:18px;color:#232629">From:</div>
  <div class="a" style="left:573px;top:57px;width:168px;height:39px;background:#fff;border:1px solid #c3c4c6;border-radius:3px"></div>
  <div class="a" style="left:582px;top:68px;font-size:13.5px;line-height:18px;color:#232629">0 sec</div>
  <div class="a" style="left:746px;top:68px;font-size:13.5px;line-height:18px;color:#232629">To:</div>
  <div class="a" style="left:767px;top:56px;width:168px;height:40px;background:#fff;border:1px solid #c3c4c6;border-radius:3px"></div>
  <div class="a" style="left:776px;top:68px;font-size:13.5px;line-height:18px;color:#232629">150 ns</div>
  <svg style="left:949px;top:64px" width="25" height="25" viewBox="0 0 25 25"><path d="M6.2 1.6A11.7 11.7 0 0 1 22.5 17.2L17.3 12.2M17.7 22.2A11.7 11.7 0 0 1 1.7 6.4L6.7 11.4" stroke="#232629" stroke-width="1.1" fill="none"/></svg>

  <!-- SST -->
  <svg style="left:3px;top:107px" width="13" height="8" viewBox="0 0 13 8"><path d="M0.5 0.5L6.5 6.5L12.5 0.5" stroke="#232629" stroke-width="1.1" fill="none"/></svg>
  <div class="a" style="left:17px;top:105px;font-size:12.3px;line-height:16px;color:#232629;letter-spacing:-0.7px">SST</div>
  <div class="a" style="left:4px;top:125px;width:203px;height:148px;background:#fff;border:1px solid #bfc1c3"></div>
  <svg style="left:8px;top:136px" width="11" height="7" viewBox="0 0 11 7"><path d="M0.5 0.5L5.5 5.5L10.5 0.5" stroke="#232629" stroke-width="1.1" fill="none"/></svg>
  <svg style="left:23px;top:130px" width="13" height="16" viewBox="0 0 13 16"><defs><linearGradient id="cyl" x1="0" y1="0" x2="1" y2="0"><stop offset="0" stop-color="#c8c8c8"/><stop offset="0.5" stop-color="#f4f4f4"/><stop offset="1" stop-color="#bdbdbd"/></linearGradient></defs><path d="M0.5 3V13A6 2.5 0 0 0 12.5 13V3" fill="url(#cyl)" stroke="#9a9a9a" stroke-width="0.8"/><ellipse cx="6.5" cy="3" rx="6" ry="2.5" fill="#eee" stroke="#9a9a9a" stroke-width="0.8"/></svg>
  <div class="a" style="left:39px;top:130px;font-size:14px;line-height:18px;color:#232629;letter-spacing:0.5px">top</div>
  <div class="a" style="left:5px;top:151px;width:201px;height:25px;background:#3daee9"></div>
  <svg style="left:12px;top:151px" width="10" height="14" viewBox="0 0 10 14"><path d="M0.5 1V11.5H9" stroke="#e0f2fc" stroke-width="1" fill="none" stroke-dasharray="1 1"/></svg>
  <svg style="left:25px;top:158px" width="7" height="11" viewBox="0 0 7 12"><path d="M0.5 0.5L6 6L0.5 11.5" stroke="#fff" stroke-width="1.1" fill="none"/></svg>
  <svg style="left:36px;top:155px" width="17" height="17" viewBox="0 0 17 17"><path d="M5 1.5L10 0.5L14 3V8L9 9L5 7Z" fill="#8fd0ef" stroke="#2a8fc0" stroke-width="0.6"/><path d="M0.5 7L4.5 5.5L7.5 8V12L3.5 13L0.5 11Z" fill="#b6e39a" stroke="#4d9a2a" stroke-width="0.6"/><path d="M7 9L12 8L16.5 10.5V15L11.5 16.5L7 14Z" fill="#ef5a5a" stroke="#b02020" stroke-width="0.6"/></svg>
  <div class="a" style="left:54px;top:155px;width:152px;overflow:hidden;white-space:nowrap;letter-spacing:0.3px;font-size:14px;line-height:18px;color:#fff">quine20240419testbench</div>
  <div class="a" style="left:4px;top:276px;width:203px;height:1px;background:#c9cacc"></div>

  <!-- signals list -->
  <div class="a" style="left:4px;top:280px;width:203px;height:282px;background:#fff;border:1px solid #bfc1c3"></div>
  <div class="a" style="left:5px;top:281px;width:201px;height:32px;background:#fafafa;border-bottom:1px solid #c6c7c8"></div>
  <div class="a" style="left:11px;top:289px;font-size:13.5px;line-height:18px;color:#232629">Signals</div>
  <div class="a sg" style="top:318px">x0</div>
  <div class="a sg" style="top:343px">x1</div>
  <div class="a sg" style="top:368px">x2</div>
  <div class="a sg" style="top:393px">x3</div>
  <div class="a" style="left:5px;top:413px;width:201px;height:25px;background:#bfe0f5"></div>
  <div class="a sg" style="top:418px;color:#e9f3fa">y</div>
  <!-- search -->
  <div class="a" style="left:4px;top:570px;width:203px;height:32px;background:#fff;border:1px solid #c3c4c6;border-radius:3px"></div>
  <svg style="left:15px;top:579px" width="13" height="13" viewBox="0 0 13 13"><circle cx="5" cy="5" r="4" stroke="#232629" stroke-width="1.2" fill="none"/><path d="M8 8L12 12" stroke="#232629" stroke-width="1.3"/></svg>
  <!-- buttons -->
  <div class="a btn" style="left:4px;top:610px;width:63px">Append</div>
  <div class="a btn" style="left:74px;top:610px;width:58px">Insert</div>
  <div class="a btn" style="left:139px;top:610px;width:68px">Replace</div>

  <!-- pane separators -->
  <div class="a" style="left:210px;top:102px;width:1px;height:546px;background:#cfd0d2"></div>
  <div class="a" style="left:289px;top:102px;width:1px;height:546px;background:#cfd0d2"></div>
  <!-- signals frame -->
  <div class="a" style="left:213px;top:114px;width:74px;height:531px;border:1px solid #c6c7c9;border-top:none"></div>
  <div class="a" style="left:256px;top:114px;width:31px;height:1px;background:#c6c7c9"></div>
  <div class="a" style="left:213px;top:107px;font-size:13px;line-height:16px;color:#232629;background:#eff0f1;padding-right:2px">Signals</div>
  <div class="a" style="left:214px;top:124px;width:72px;height:504px;background:#f4f4f4"></div>
  <div class="a" style="left:214px;top:124px;width:72px;height:22px;background:#c9c9c9"></div>
  <div class="a mono" style="left:217px;top:133px">Time</div>
  <div class="a" style="left:214px;top:168px;width:72px;height:1px;background:#fbfbfb"></div>
  <div class="a" style="left:214px;top:191px;width:72px;height:1px;background:#fbfbfb"></div>
  <div class="a" style="left:214px;top:214px;width:72px;height:1px;background:#fbfbfb"></div>
  <div class="a" style="left:214px;top:237px;width:72px;height:1px;background:#fbfbfb"></div>
  <div class="a mono" style="left:216.5px;top:154px">x0</div><div class="a mono" style="left:236px;top:154px">=0</div>
  <div class="a mono" style="left:216.5px;top:177px">x1</div><div class="a mono" style="left:236px;top:177px">=0</div>
  <div class="a mono" style="left:216.5px;top:200px">x2</div><div class="a mono" style="left:236px;top:200px">=0</div>
  <div class="a mono" style="left:216.5px;top:223px">x3</div><div class="a mono" style="left:236px;top:223px">=0</div>
  <div class="a" style="left:214px;top:238px;width:72px;height:22px;background:#4764ad"></div>
  <div class="a mono" style="left:225px;top:246px;color:#fff">y</div><div class="a mono" style="left:236px;top:246px;color:#fff">=0</div>
  <div class="a" style="left:214px;top:628px;width:72px;height:1px;background:#d3d4d5"></div>
  <div class="a" style="left:218px;top:632px;width:64px;height:8px;border-radius:4px;background:#c8c9ca;border:1px solid #b5b6b8"></div>
  <!-- waves frame -->
  <div class="a" style="left:292px;top:114px;width:705px;height:531px;border:1px solid #c6c7c9;border-top:none"></div>
  <div class="a" style="left:333px;top:114px;width:664px;height:1px;background:#c6c7c9"></div>
  <div class="a" style="left:293px;top:107px;font-size:13px;line-height:16px;color:#232629">Waves</div>
  <div class="a" style="left:293px;top:124px;width:686px;height:503px;background:#000;overflow:hidden">
    <div class="a mono" style="left:-1.5px;top:1px;font-size:10.5px;line-height:13px;color:#fff">0</div>
    <div class="a mono" style="left:280px;top:1px;font-size:10.5px;line-height:13px;color:#fff">100 ns</div>
<svg style="left:0;top:0" width="686" height="503" viewBox="0 0 686 503" shape-rendering="crispEdges">
<path d="M0 13.5H447.5" stroke="#2e2e8e" stroke-width="1"/>
<path d="M29.5 13.5V22.5" stroke="#2e2e8e" stroke-width="1"/>
<path d="M59.5 13.5V22.5" stroke="#2e2e8e" stroke-width="1"/>
<path d="M89.5 13.5V22.5" stroke="#2e2e8e" stroke-width="1"/>
<path d="M119.5 13.5V22.5" stroke="#2e2e8e" stroke-width="1"/>
<path d="M149.5 13.5V22.5" stroke="#2e2e8e" stroke-width="1"/>
<path d="M178.5 13.5V22.5" stroke="#2e2e8e" stroke-width="1"/>
<path d="M208.5 13.5V22.5" stroke="#2e2e8e" stroke-width="1"/>
<path d="M238.5 13.5V22.5" stroke="#2e2e8e" stroke-width="1"/>
<path d="M268.5 13.5V22.5" stroke="#2e2e8e" stroke-width="1"/>
<path d="M298.5 13.5V22.5" stroke="#2e2e8e" stroke-width="1"/>
<path d="M327.5 13.5V22.5" stroke="#2e2e8e" stroke-width="1"/>
<path d="M357.5 13.5V22.5" stroke="#2e2e8e" stroke-width="1"/>
<path d="M387.5 13.5V22.5" stroke="#2e2e8e" stroke-width="1"/>
<path d="M417.5 13.5V22.5" stroke="#2e2e8e" stroke-width="1"/>
<path d="M447.5 13.5V22.5" stroke="#2e2e8e" stroke-width="1"/>
<path d="M0 44.5H447.5" stroke="#2e2e8e" stroke-width="1"/>
<path d="M0 67.5H447.5" stroke="#2e2e8e" stroke-width="1"/>
<path d="M0 90.5H447.5" stroke="#2e2e8e" stroke-width="1"/>
<path d="M0 113.5H447.5" stroke="#2e2e8e" stroke-width="1"/>
<path d="M0 136.5H447.5" stroke="#2e2e8e" stroke-width="1"/>
<path d="M298.5 0V503" stroke="#2e2e8e" stroke-width="1"/>
<path d="M0.5 0V22" stroke="#2e2e8e" stroke-width="1"/>
<path d="M0.5 22V503" stroke="#f08080" stroke-width="1"/>
<path d="M0.5 42.5H29.5V25.5H59.5V42.5H89.5V25.5H119.5V42.5H149.5V25.5H178.5V42.5H208.5V25.5H238.5V42.5H268.5V25.5H298.5V42.5H327.5V25.5H357.5V42.5H387.5V25.5H417.5V42.5H447.5V25.5" stroke="#00ff00" stroke-width="1" fill="none"/>
<path d="M0.5 65.5H59.5V48.5H119.5V65.5H178.5V48.5H238.5V65.5H298.5V48.5H357.5V65.5H417.5V48.5H447.5" stroke="#00ff00" stroke-width="1" fill="none"/>
<path d="M0.5 88.5H119.5V71.5H238.5V88.5H357.5V71.5H447.5" stroke="#00ff00" stroke-width="1" fill="none"/>
<path d="M0.5 111.5H238.5V94.5H447.5" stroke="#00ff00" stroke-width="1" fill="none"/>
<path d="M0.5 134.5H29.5V117.5H89.5V134.5H119.5V117.5H178.5V134.5H238.5V117.5H268.5V134.5H327.5V117.5H357.5V134.5H417.5V117.5H447.5V134.5" stroke="#00ff00" stroke-width="1" fill="none"/>
</svg>
  </div>
  <div class="a" style="left:984px;top:128px;width:8px;height:496px;border-radius:5px;background:#c8c9ca;border:1px solid #b5b6b8"></div>
  <div class="a" style="left:293px;top:627px;width:703px;height:1px;background:#d3d4d5"></div>
  <div class="a" style="left:297px;top:632px;width:31px;height:8px;border-radius:4px;background:#c8c9ca;border:1px solid #b5b6b8"></div>
</div>
<div id="task" class="a">
  <svg style="left:9px;top:10px" width="26" height="26" viewBox="0 0 26 26"><circle cx="7" cy="2.5" r="1.6" fill="#fcfcfc"/><circle cx="3.5" cy="11.5" r="2.4" fill="#fcfcfc"/><circle cx="10" cy="20.5" r="3" fill="#fcfcfc"/><path d="M15 1L22.5 8L15 15" stroke="#fcfcfc" stroke-width="3.2" fill="none" stroke-linejoin="miter"/></svg>
  <svg style="left:56px;top:8px" width="28" height="28" viewBox="0 0 28 28"><defs><linearGradient id="stg" x1="0" y1="0" x2="1" y2="1"><stop offset="0" stop-color="#4d5052"/><stop offset="0.5" stop-color="#2e3134"/><stop offset="1" stop-color="#232629"/></linearGradient></defs><rect x="0" y="0" width="28" height="28" rx="1" fill="url(#stg)"/><path d="M3 10H20" stroke="#3daee9" stroke-width="2"/><path d="M20 10H25" stroke="#505457" stroke-width="1.5"/><circle cx="19.5" cy="10" r="2.3" fill="#fcfcfc"/><path d="M3 18H10" stroke="#3daee9" stroke-width="2"/><path d="M10 18H25" stroke="#505457" stroke-width="1.5"/><circle cx="10" cy="18" r="2.3" fill="#fcfcfc"/></svg>
  <div class="a tk" style="left:97px"></div>
  <div class="a tk" style="left:149px;background:#6f4521;border-top-color:#d46413"></div>
  <div class="a tk" style="left:201px"></div>
  <div class="a tk" style="left:253px"></div>
  <div class="a tk" style="left:305px"></div>
  <div class="a tk" style="left:357px"></div>
  <div class="a tk" style="left:409px;background:#2b5672;border-top-color:#3daee9"></div>
  <!-- firefox -->
  <svg style="left:107px;top:5px" width="31" height="31" viewBox="0 0 31 31"><defs><radialGradient id="ff2" cx="0.75" cy="0.15" r="1"><stop offset="0" stop-color="#fff44f"/><stop offset="0.3" stop-color="#ffbd4f"/><stop offset="0.55" stop-color="#ff7139"/><stop offset="0.85" stop-color="#f5156c"/><stop offset="1" stop-color="#e31587"/></radialGradient><radialGradient id="ff3" cx="0.4" cy="0.4" r="0.7"><stop offset="0" stop-color="#b833e1"/><stop offset="1" stop-color="#6c3ee0"/></radialGradient></defs><path d="M22 1C25 4 30 9 30 17A14.5 14.5 0 0 1 1 17C1 12 3 8 6 6C6 8 7 9 8 9.5C10 6 14 4.5 17 5C19 3 21 2 22 1Z" fill="url(#ff2)"/><circle cx="15" cy="17" r="6.5" fill="url(#ff3)"/><path d="M5 12C8 9 12 9 15 10.5C12 11 10 12 9 14C7 13 6 12.5 5 12Z" fill="#ffa436"/></svg>
  <svg style="left:117px;top:33px" width="10" height="10" viewBox="0 0 10 10"><circle cx="5" cy="5" r="4.8" fill="#27ae60"/><path d="M5 2.2V7.8M2.2 5H7.8" stroke="#fff" stroke-width="1.5"/></svg>
  <!-- store -->
  <svg style="left:162px;top:8px" width="24" height="28" viewBox="0 0 24 28"><defs><linearGradient id="sbg" x1="0" y1="0" x2="0" y2="1"><stop offset="0" stop-color="#3ab7f5"/><stop offset="1" stop-color="#1d82d8"/></linearGradient></defs><path d="M7 8V5A5 5 0 0 1 17 5V8" stroke="#3daee9" stroke-width="1.3" fill="none"/><rect x="0" y="7" width="24" height="21" rx="1" fill="url(#sbg)"/><path d="M14 14L16.5 16.5L14 19" stroke="#fcfcfc" stroke-width="1.4" fill="none"/><circle cx="11" cy="13" r="0.8" fill="#d0ecfc"/><circle cx="8" cy="17" r="0.8" fill="#d0ecfc"/><circle cx="10" cy="21.5" r="1" fill="#d0ecfc"/></svg>
  <!-- files -->
  <svg style="left:211px;top:8px" width="30" height="28" viewBox="0 0 30 28"><path d="M0 2A1 1 0 0 1 1 1H12L14 3H30V28H0Z" fill="#1d6fa8"/><rect x="1" y="5" width="28" height="6" fill="#f5f5f5"/><path d="M0 8H12L14 10H30V28H0Z" fill="#3daee9"/><path d="M0 10H30V28H0Z" fill="#3aa0d4" opacity="0.6"/></svg>
  <!-- bird -->
  <svg style="left:264px;top:8px" width="28" height="28" viewBox="0 0 28 28"><circle cx="14" cy="14" r="13.5" fill="#1e8ef0"/><path d="M5 7C10 4 18 5 22 5C17 8 12 10 9 14C13 12 19 12 24 10C20 16 14 17 12 18C14 20 16 24 17 26C13 23 8 20 6 16C5 13 6 10 5 7Z" fill="#e6e6e6"/></svg>
  <!-- terminal -->
  <svg style="left:316px;top:8px" width="28" height="28" viewBox="0 0 28 28"><defs><linearGradient id="tg" x1="0" y1="0" x2="1" y2="1"><stop offset="0" stop-color="#4a5052"/><stop offset="0.5" stop-color="#353a3c"/><stop offset="1" stop-color="#2a2e30"/></linearGradient></defs><rect x="0" y="0" width="28" height="28" rx="1" fill="url(#tg)"/><path d="M11 7L17 14L11 21" stroke="#b8bcbe" stroke-width="1.1" fill="none"/></svg>
  <!-- lifebuoy -->
  <svg style="left:368px;top:8px" width="28" height="28" viewBox="0 0 28 28"><circle cx="14" cy="14" r="10" stroke="#e6e8ea" stroke-width="7" fill="none"/><circle cx="14" cy="14" r="10" stroke="#da2537" stroke-width="7" fill="none" stroke-dasharray="7.85 7.85" stroke-dashoffset="3.9"/><circle cx="14" cy="14" r="6.4" fill="#474a4e"/></svg>
  <!-- gtkwave -->
  <svg style="left:418px;top:6px" width="32" height="32" viewBox="0 0 32 32"><rect x="0" y="0" width="32" height="32" fill="#b8e67d"/><rect x="2" y="2" width="28" height="28" fill="#000"/><path d="M8 2V30M16 2V30M24 2V30M2 9H30M2 16H30M2 23H30" stroke="#4c8a1c" stroke-width="1.2"/><path d="M3 26H8L12 6H20L24 26H29" stroke="#8ae234" stroke-width="1.6" fill="none"/></svg>
  <!-- tray -->
  <svg style="left:1564px;top:13px" width="19" height="19" viewBox="0 0 19 19"><path d="M15 4A8 8 0 1 0 16.5 11" stroke="#fcfcfc" stroke-width="1.2" fill="none"/><path d="M9 13V6M6 8.5L9 5.5L12 8.5" stroke="#fcfcfc" stroke-width="2" fill="none"/><path d="M5.5 8.5L9 5L12.5 8.5Z" fill="#fcfcfc"/><circle cx="14.5" cy="14.5" r="3" fill="#da4453"/></svg>
  <svg style="left:1594px;top:12px" width="18" height="20" viewBox="0 0 18 20"><path d="M7 1L12 3V8L7 10L2 8V3Z" fill="#3daee9"/><path d="M2 8L7 10V15L2 17L-1 15V10Z" transform="translate(2 0)" fill="#f67400"/><path d="M11 10L16 12V17L11 19L6 17V12Z" fill="#1cdc3a"/></svg>
  <svg style="left:1625px;top:13px" width="16" height="18" viewBox="0 0 16 18"><rect x="0.7" y="3.7" width="14.6" height="13.6" stroke="#fcfcfc" stroke-width="1.3" fill="none"/><rect x="3" y="0.5" width="10" height="4" fill="#fcfcfc"/><path d="M3.5 8H12.5M3.5 11H11M3.5 14H8" stroke="#fcfcfc" stroke-width="1.1"/></svg>
  <svg style="left:1652px;top:16px" width="21" height="13" viewBox="0 0 21 13"><rect x="0.8" y="0.8" width="17.4" height="11.4" stroke="#fcfcfc" stroke-width="1.3" fill="none"/><rect x="18.5" y="4" width="2.5" height="5" fill="#fcfcfc"/><path d="M2.5 2.5H16L14.5 10.5H2.5Z" fill="#fcfcfc"/></svg>
  <svg style="left:1687px;top:13px" width="12" height="18" viewBox="0 0 12 18"><path d="M1 5L10 13L5.5 17V1L10 5L1 13" stroke="#fcfcfc" stroke-width="1.2" fill="none"/></svg>
  <svg style="left:1714px;top:13px" width="18" height="18" viewBox="0 0 18 18"><path d="M0 6H3L8 1.5V16.5L3 12H0Z" fill="#fcfcfc"/><path d="M11 5A5 5 0 0 1 11 13M13.5 2.5A8.5 8.5 0 0 1 13.5 15.5" stroke="#fcfcfc" stroke-width="1.2" fill="none"/></svg>
  <svg style="left:1742px;top:13px" width="22" height="18" viewBox="0 0 22 18"><path d="M1 6A14 14 0 0 1 21 6M4.5 9.5A9 9 0 0 1 17.5 9.5M8 13A4 4 0 0 1 14 13" stroke="#fcfcfc" stroke-width="1.2" fill="none"/><circle cx="11" cy="16" r="1.6" stroke="#fcfcfc" stroke-width="1" fill="none"/></svg>
  <svg style="left:1774px;top:18px" width="14" height="8" viewBox="0 0 14 8"><path d="M1 7L7 1L13 7" stroke="#fcfcfc" stroke-width="1.3" fill="none"/></svg>
  <div class="a" style="left:1792px;top:8px;width:80px;text-align:center;font-size:15.5px;line-height:15px;color:#fcfcfc">12:51:35</div>
  <div class="a" style="left:1792px;top:23px;width:80px;text-align:center;font-size:13px;line-height:14px;color:#fcfcfc">19.04.24</div>
  <svg style="left:1886px;top:13px" width="17" height="17" viewBox="0 0 17 17"><rect x="0.7" y="0.7" width="15.6" height="15.6" stroke="#fcfcfc" stroke-width="1.3" fill="none"/><path d="M1 15H16" stroke="#fcfcfc" stroke-width="1.2"/></svg>
</div>
</body></html>
